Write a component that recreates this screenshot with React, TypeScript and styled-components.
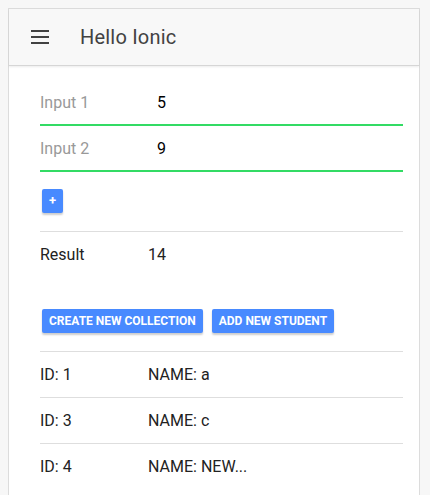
import React from "react";
import styled, { createGlobalStyle } from "styled-components";

const Global = createGlobalStyle`
  html, body { height: 100%; }
  body {
    margin: 8px 10px 0 8px;
    background: #f7f7f7;
    font-family: Roboto, "Noto Sans", sans-serif;
    overflow: hidden;
  }
`;

const Frame = styled.div`
  box-sizing: border-box;
  background: #fff;
  border: 1px solid #dcdcdc;
  border-bottom: 0;
  box-shadow: 0 0 6px rgba(0, 0, 0, 0.1);
  height: calc(100vh - 8px);
`;

const Header = styled.header`
  height: 56px;
  display: flex;
  align-items: center;
  background: #f8f8f8;
  border-bottom: 1px solid #d6d6d6;
  box-shadow: 0 1px 2px rgba(0, 0, 0, 0.08);
`;

const MenuButton = styled.button`
  border: 0;
  background: transparent;
  padding: 0;
  margin: 0 31px 0 22px;
  width: 18px;
  height: 14px;
  display: flex;
  flex-direction: column;
  justify-content: space-between;
`;

const MenuLine = styled.span`
  display: block;
  height: 2px;
  width: 18px;
  background: #424242;
`;

const Title = styled.h1`
  margin: 0;
  font-size: 20px;
  font-weight: 400;
  color: #424242;
  letter-spacing: 0.2px;
`;

const Content = styled.main`
  padding: 14px 16px 0 31px;
  display: flex;
  flex-direction: column;
`;

const InputItem = styled.label`
  display: flex;
  align-items: center;
  height: 44px;
  border-bottom: 2px solid #32db64;
`;

const Label = styled.span<{ $muted?: boolean }>`
  width: 108px;
  flex: none;
  font-size: 16px;
  color: ${(p) => (p.$muted ? "#999" : "#222")};
`;

const Value = styled.span<{ $indent?: boolean }>`
  font-size: 16px;
  color: ${(p) => (p.$indent ? "#000" : "#222")};
  padding-left: ${(p) => (p.$indent ? "9px" : "0")};
`;

const Button = styled.button<{ $square?: boolean }>`
  align-self: flex-start;
  border: 0;
  border-radius: 2px;
  background: #488aff;
  color: #fff;
  font-family: Roboto, sans-serif;
  font-weight: 700;
  font-size: ${(p) => (p.$square ? "13px" : "12px")};
  text-transform: uppercase;
  height: 24px;
  padding: ${(p) => (p.$square ? "0" : "0 7px")};
  width: ${(p) => (p.$square ? "21px" : "auto")};
  margin: 0 2px;
  box-shadow: 0 2px 2px rgba(0, 0, 0, 0.2);
  line-height: 24px;
  white-space: nowrap;
`;

const PlusRow = styled.div`
  padding: 17px 0 18px;
  border-bottom: 1px solid #dedede;
  display: flex;
`;

const Row = styled.div<{ $border?: boolean }>`
  display: flex;
  align-items: center;
  height: 45px;
  border-bottom: ${(p) => (p.$border ? "1px solid #dedede" : "1px solid transparent")};
`;

const ButtonBar = styled.div`
  display: flex;
  gap: 5px;
  padding: 31px 0 18px;
  border-bottom: 1px solid #dedede;
`;

const students = [
  { id: 1, name: "a" },
  { id: 3, name: "c" },
  { id: 4, name: "NEW..." },
];

export default function App() {
  return (
    <>
      <Global />
      <Frame>
        <Header>
          <MenuButton aria-label="menu">
            <MenuLine />
            <MenuLine />
            <MenuLine />
          </MenuButton>
          <Title>Hello Ionic</Title>
        </Header>
        <Content>
          <InputItem>
            <Label $muted>Input 1</Label>
            <Value $indent>5</Value>
          </InputItem>
          <InputItem>
            <Label $muted>Input 2</Label>
            <Value $indent>9</Value>
          </InputItem>
          <PlusRow>
            <Button $square>+</Button>
          </PlusRow>
          <Row>
            <Label>Result</Label>
            <Value>14</Value>
          </Row>
          <ButtonBar>
            <Button>Create new collection</Button>
            <Button>Add new student</Button>
          </ButtonBar>
          {students.map((s, i) => (
            <Row key={s.id} $border={i < students.length - 1}>
              <Label>ID: {s.id}</Label>
              <Value>NAME: {s.name}</Value>
            </Row>
          ))}
        </Content>
      </Frame>
    </>
  );
}
